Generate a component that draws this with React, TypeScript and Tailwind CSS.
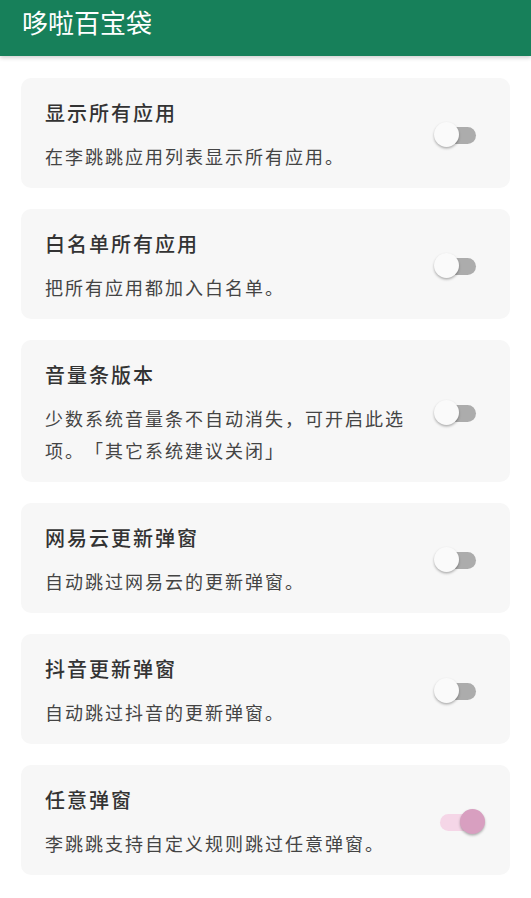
import { useState } from 'react'

type Item = {
  title: string
  desc: string
  on: boolean
}

const ITEMS: Item[] = [
  { title: '显示所有应用', desc: '在李跳跳应用列表显示所有应用。', on: false },
  { title: '白名单所有应用', desc: '把所有应用都加入白名单。', on: false },
  { title: '音量条版本', desc: '少数系统音量条不自动消失，可开启此选项。「其它系统建议关闭」', on: false },
  { title: '网易云更新弹窗', desc: '自动跳过网易云的更新弹窗。', on: false },
  { title: '抖音更新弹窗', desc: '自动跳过抖音的更新弹窗。', on: false },
  { title: '任意弹窗', desc: '李跳跳支持自定义规则跳过任意弹窗。', on: true },
]

function Toggle({ on, onClick }: { on: boolean; onClick: () => void }) {
  return (
    <button
      type="button"
      onClick={onClick}
      aria-pressed={on}
      className="relative w-[52px] h-[26px] shrink-0"
    >
      <span
        className={`absolute left-[6px] top-[4.5px] w-[36px] h-[17px] rounded-full ${
          on ? 'bg-[#f5d6e7]' : 'bg-[#acacac]'
        }`}
      />
      <span
        className={`absolute top-0 w-[25px] h-[25px] rounded-full shadow-[0_1.5px_2.5px_rgba(0,0,0,0.3)] ${
          on ? 'left-[26px] bg-[#d89fc0]' : 'left-0 bg-[#fafafa]'
        }`}
      />
    </button>
  )
}

export default function App() {
  const [items, setItems] = useState(ITEMS)

  const flip = (i: number) =>
    setItems((prev) => prev.map((it, j) => (j === i ? { ...it, on: !it.on } : it)))

  return (
    <div
      className="min-h-[898px] bg-white [text-spacing-trim:space-all]"
      style={{ fontFamily: '"Noto Sans CJK SC", "Noto Sans", sans-serif' }}
    >
      {/* Top bar */}
      <header className="h-[56px] bg-[#17805a] pl-[22px] shadow-[0_2px_4px_rgba(0,0,0,0.18)]">
        <h1 className="text-[26px] leading-[44px] font-normal text-white">哆啦百宝袋</h1>
      </header>

      <main className="flex flex-col gap-[21px] px-[21px] pt-[22px] pb-[21px]">
        {items.map((item, i) => (
          <div
            key={item.title}
            className="flex items-center gap-[20px] rounded-[10px] bg-[#f7f7f7] pl-[24px] pr-[24px] pt-[20px] pb-[16px]"
          >
            <div className="min-w-0 flex-1">
              <p className="text-[20px] leading-[30px] font-medium tracking-[2px] text-[#333333]">
                {item.title}
              </p>
              <p className="mt-[12px] text-[18px] leading-[32px] tracking-[2px] text-[#444444]">
                {item.desc}
              </p>
            </div>
            <Toggle on={item.on} onClick={() => flip(i)} />
          </div>
        ))}
      </main>
    </div>
  )
}
